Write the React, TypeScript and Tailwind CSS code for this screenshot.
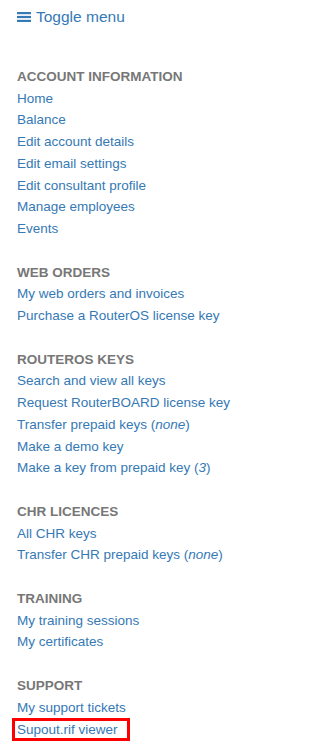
import React from 'react'

type Item = { label: string; note?: string; marked?: boolean }
type Section = { title: string; items: Item[] }

const sections: Section[] = [
  {
    title: 'ACCOUNT INFORMATION',
    items: [
      { label: 'Home' },
      { label: 'Balance' },
      { label: 'Edit account details' },
      { label: 'Edit email settings' },
      { label: 'Edit consultant profile' },
      { label: 'Manage employees' },
      { label: 'Events' },
    ],
  },
  {
    title: 'WEB ORDERS',
    items: [{ label: 'My web orders and invoices' }, { label: 'Purchase a RouterOS license key' }],
  },
  {
    title: 'ROUTEROS KEYS',
    items: [
      { label: 'Search and view all keys' },
      { label: 'Request RouterBOARD license key' },
      { label: 'Transfer prepaid keys', note: 'none' },
      { label: 'Make a demo key' },
      { label: 'Make a key from prepaid key', note: '3' },
    ],
  },
  {
    title: 'CHR LICENCES',
    items: [{ label: 'All CHR keys' }, { label: 'Transfer CHR prepaid keys', note: 'none' }],
  },
  {
    title: 'TRAINING',
    items: [{ label: 'My training sessions' }, { label: 'My certificates' }],
  },
  {
    title: 'SUPPORT',
    items: [{ label: 'My support tickets' }, { label: 'Supout.rif viewer', marked: true }],
  },
]

function Hamburger() {
  return (
    <svg width="14" height="10" viewBox="0 0 14 10" className="shrink-0">
      <rect x="0" y="0" width="14" height="2.2" fill="currentColor" />
      <rect x="0" y="3.9" width="14" height="2.2" fill="currentColor" />
      <rect x="0" y="7.8" width="14" height="2.2" fill="currentColor" />
    </svg>
  )
}

function MenuLink({ item }: { item: Item }) {
  const text = (
    <>
      {item.label}
      {item.note && (
        <>
          {' ('}
          <i>{item.note}</i>
          {')'}
        </>
      )}
    </>
  )

  if (item.marked) {
    return (
      <div>
        <a href="#" className="relative inline-block text-[#3579b5]">
          {text}
          <span className="pointer-events-none absolute -left-[5px] -right-[12px] -top-[1px] -bottom-[1px] border-[3px] border-[#ff0000]" />
        </a>
      </div>
    )
  }

  return (
    <div>
      <a href="#" className="text-[#3579b5]">
        {text}
      </a>
    </div>
  )
}

export default function App() {
  return (
    <div
      className="min-h-[746px] w-[284px] bg-white pl-[17px]"
      style={{ fontFamily: '"Liberation Sans", Arial, sans-serif' }}
    >
      <button className="flex items-center gap-[5px] pt-[7px] text-[15.5px] leading-[20px] text-[#3579b5]">
        <Hamburger />
        <span>Toggle menu</span>
      </button>

      <nav className="mt-[39px] text-[13.5px] leading-[21.7px]">
        {sections.map((section, i) => (
          <div key={section.title} className={i > 0 ? 'mt-[22px]' : ''}>
            <div className="font-bold text-[#777777]">{section.title}</div>
            {section.items.map((item) => (
              <MenuLink key={item.label} item={item} />
            ))}
          </div>
        ))}
      </nav>
    </div>
  )
}
